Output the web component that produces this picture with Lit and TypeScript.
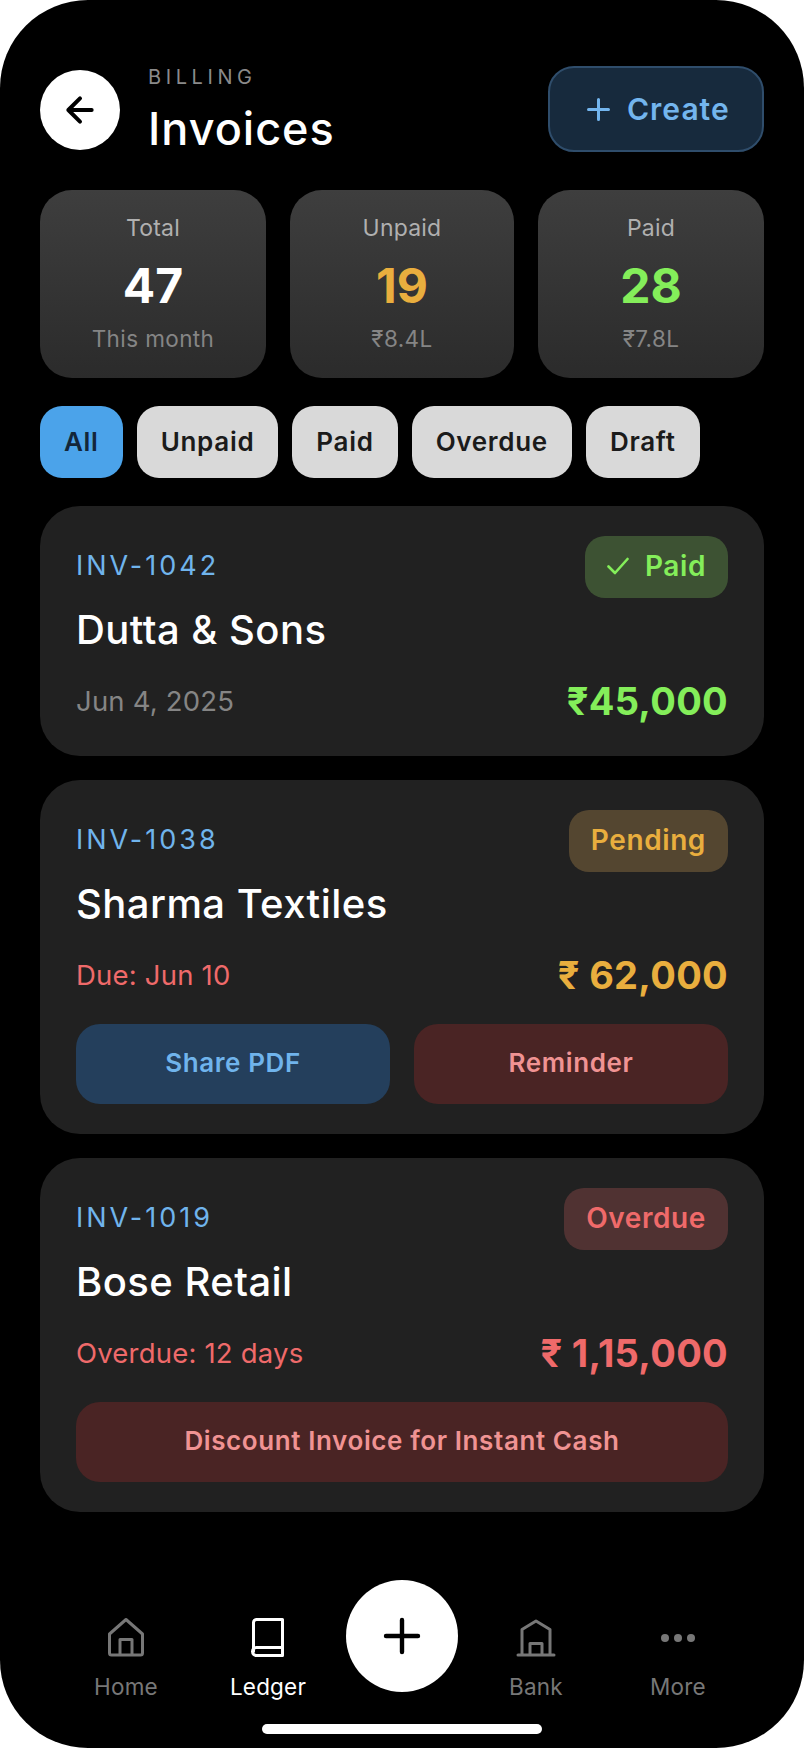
import { LitElement, html, css, svg } from "lit";
import { customElement } from "lit/decorators.js";

const icons = {
  back: svg`<path d="M19 12H5M12 19l-7-7 7-7" fill="none" stroke="#000" stroke-width="2.4" stroke-linecap="round" stroke-linejoin="round"/>`,
  home: svg`<path d="M7.500 20 24 5.500 40.500 20v19a2 2 0 0 1-2 2H9.500a2 2 0 0 1-2-2ZM18 41V25.500h12V41" fill="none" stroke="currentColor" stroke-width="3" stroke-linejoin="round"/>`,
  book: svg`<path d="M9.500 37.500V8.500a3 3 0 0 1 3-3h26v36h-26a4 4 0 0 1 0-8h26" fill="none" stroke="currentColor" stroke-width="3" stroke-linecap="round" stroke-linejoin="round"/>`,
  bank: svg`<path d="M10 41V15.500L24 7l14 8.500V41M6 41h36M18 41V29.500h12V41" fill="none" stroke="currentColor" stroke-width="3" stroke-linecap="round" stroke-linejoin="round"/>`,
  more: svg`<g fill="currentColor"><circle cx="11" cy="24" r="4"/><circle cx="24" cy="24" r="4"/><circle cx="37" cy="24" r="4"/></g>`,
};

interface Invoice {
  id: string;
  name: string;
  meta: string;
  amount: string;
  tone: "paid" | "pending" | "overdue";
  status: string;
  actions: { label: string; kind: "blue" | "red" }[];
}

const invoices: Invoice[] = [
  { id: "INV-1042", name: "Dutta & Sons", meta: "Jun 4, 2025", amount: "₹45,000", tone: "paid", status: "Paid", actions: [] },
  {
    id: "INV-1038", name: "Sharma Textiles", meta: "Due: Jun 10", amount: "₹ 62,000", tone: "pending", status: "Pending",
    actions: [{ label: "Share PDF", kind: "blue" }, { label: "Reminder", kind: "red" }],
  },
  {
    id: "INV-1019", name: "Bose Retail", meta: "Overdue: 12 days", amount: "₹ 1,15,000", tone: "overdue", status: "Overdue",
    actions: [{ label: "Discount Invoice for Instant Cash", kind: "red" }],
  },
];

const stats = [
  { label: "Total", value: "47", sub: "This month", tone: "white" },
  { label: "Unpaid", value: "19", sub: "₹8.4L", tone: "pending" },
  { label: "Paid", value: "28", sub: "₹7.8L", tone: "paid" },
];

const filters = ["All", "Unpaid", "Paid", "Overdue", "Draft"];

@customElement("app-root")
export class AppRoot extends LitElement {
  static styles = css`
    :host {
      display: block;
      width: 804px;
      height: 1748px;
      background: #fff;
      font-family: "Inter", "Noto Sans", sans-serif;
    }
    .phone {
      box-sizing: border-box;
      width: 804px;
      height: 1748px;
      background: #000;
      border-radius: 88px;
      overflow: hidden;
      padding: 66px 40px 14px;
      display: flex;
      flex-direction: column;
      color: #fff;
    }
    .header { display: flex; align-items: center; height: 86px; }
    .back {
      width: 80px; height: 80px; border-radius: 50%; background: #fff;
      display: flex; align-items: center; justify-content: center; margin-right: 28px; margin-top: 2px;
    }
    .back svg { width: 40px; height: 40px; }
    .titles { flex: 1; display: flex; flex-direction: column; margin-top: 4px; }
    .eyebrow { font-size: 20px; line-height: 24px; letter-spacing: 4.6px; color: #8a8a8a; font-weight: 400; }
    .title { font-size: 45px; line-height: 56px; font-weight: 500; margin-top: 12px; letter-spacing: 1px; }
    .create {
      box-sizing: border-box; width: 216px; height: 86px; border-radius: 26px;
      background: #172a3d; border: 2px solid #2f4d6b; color: #73b5ee;
      display: flex; align-items: center; padding-left: 37px; gap: 17px;
      font-size: 30px; font-weight: 600; letter-spacing: 1px;
    }
    .create svg { width: 23px; height: 23px; }
    .stats { display: grid; grid-template-columns: 226fr 224fr 226fr; gap: 24px; margin-top: 38px; }
    .stat {
      border-radius: 32px; background: linear-gradient(180deg, #3e3e3e 0%, #2b2b2b 100%);
      padding: 24px 0; display: flex; flex-direction: column; align-items: center; text-align: center;
    }
    .stat-label { font-size: 23px; line-height: 29px; color: #b0b0b0; letter-spacing: 0.2px; }
    .stat-value { font-size: 48px; line-height: 60px; font-weight: 700; margin-top: 13px; }
    .stat-sub { font-size: 22.500px; line-height: 30px; color: #858585; margin-top: 8px; letter-spacing: 0.4px; }
    .white { color: #fff; }
    .pending { color: #e9ae3e; }
    .paid { color: #84ee5a; }
    .overdue { color: #ef6a6a; }
    .filters { display: flex; gap: 14px; margin-top: 28px; }
    .chip {
      height: 72px; padding: 0 24px 2px; box-sizing: border-box; border-radius: 22px; background: #d9d9d9; color: #1b1b1b;
      display: flex; align-items: center; font-size: 26px; font-weight: 600; letter-spacing: 0.700px;
    }
    .chip.active { background: #4ba3ea; color: #13263a; }
    .cards { display: flex; flex-direction: column; gap: 24px; margin-top: 28px; }
    .card { background: #212121; border-radius: 40px; padding: 30px 36px; }
    .row { display: flex; align-items: center; justify-content: space-between; }
    .id { font-size: 27px; letter-spacing: 3px; color: #70b4ec; font-weight: 400; padding-bottom: 3px; }
    .badge {
      box-sizing: border-box; height: 62px; padding: 0 22px 2px; border-radius: 20px; display: flex; align-items: center; gap: 16px;
      font-size: 28px; font-weight: 600; letter-spacing: 0.600px;
    }
    .badge svg { width: 22px; height: 18px; }
    .badge.paid { background: #3d5233; }
    .badge.pending { background: #544630; }
    .badge.overdue { background: #503232; }
    .name { font-size: 40px; line-height: 50px; font-weight: 550; margin: 7px 0 21px; letter-spacing: 0.45px; }
    .meta { font-size: 27.500px; line-height: 50px; color: #858585; letter-spacing: 0.2px; }
    .meta.pending, .meta.overdue { color: #ef6a6a; }
    .amount { font-size: 38px; line-height: 50px; font-weight: 700; letter-spacing: 0.300px; }
    .actions { display: flex; gap: 24px; margin-top: 24px; }
    .action {
      flex: 1; height: 80px; border-radius: 24px; display: flex; align-items: center; justify-content: center;
      font-size: 26px; font-weight: 600; letter-spacing: 0.6px; padding-bottom: 3px; box-sizing: border-box;
    }
    .action.blue { background: #243f5c; color: #70b4ec; }
    .action.red { background: #4a2424; color: #f09393; }
    .nav {
      margin-top: auto; margin-left: 22px; margin-right: 22px;
      display: grid; grid-template-columns: 128px 128px 112px 128px 128px; gap: 14px; align-items: start;
    }
    .tab { display: flex; flex-direction: column; align-items: center; color: #777; font-size: 22.500px; line-height: 30px; margin-top: 34px; letter-spacing: 0.2px; }
    .tab svg { width: 48px; height: 48px; margin-bottom: 10px; }
    .tab.on { color: #fff; }
    .fab {
      width: 112px; height: 112px; border-radius: 50%; background: #fff;
      display: flex; align-items: center; justify-content: center;
    }
    .fab svg { width: 38px; height: 38px; }
    .indicator { align-self: center; width: 280px; height: 10px; border-radius: 5px; background: #fff; margin-top: 22px; }
  `;

  private tab(label: string, icon: unknown, on = false) {
    return html`<div class="tab ${on ? "on" : ""}"><svg viewBox="0 0 48 48">${icon}</svg><span>${label}</span></div>`;
  }

  render() {
    return html`
      <div class="phone">
        <div class="header">
          <div class="back"><svg viewBox="0 0 24 24">${icons.back}</svg></div>
          <div class="titles">
            <div class="eyebrow">BILLING</div>
            <div class="title">Invoices</div>
          </div>
          <div class="create">
            <svg viewBox="0 0 23 23"><path d="M11.500 1.500v20M1.500 11.500h20" fill="none" stroke="currentColor" stroke-width="3" stroke-linecap="round"/></svg>
            <span>Create</span>
          </div>
        </div>
        <div class="stats">
          ${stats.map((s) => html`
            <div class="stat">
              <div class="stat-label">${s.label}</div>
              <div class="stat-value ${s.tone}">${s.value}</div>
              <div class="stat-sub">${s.sub}</div>
            </div>`)}
        </div>
        <div class="filters">
          ${filters.map((f, i) => html`<div class="chip ${i === 0 ? "active" : ""}">${f}</div>`)}
        </div>
        <div class="cards">
          ${invoices.map((v) => html`
            <div class="card">
              <div class="row">
                <div class="id">${v.id}</div>
                <div class="badge ${v.tone}">
                  ${v.tone === "paid" ? html`<svg viewBox="0 0 22 18"><path d="M1.500 9.500 8 16 20.500 2" fill="none" stroke="currentColor" stroke-width="2.600" stroke-linecap="round" stroke-linejoin="round"/></svg>` : ""}
                  <span>${v.status}</span>
                </div>
              </div>
              <div class="name">${v.name}</div>
              <div class="row">
                <div class="meta ${v.tone}">${v.meta}</div>
                <div class="amount ${v.tone}">${v.amount}</div>
              </div>
              ${v.actions.length ? html`<div class="actions">
                ${v.actions.map((a) => html`<div class="action ${a.kind}">${a.label}</div>`)}
              </div>` : ""}
            </div>`)}
        </div>
        <div class="nav">
          ${this.tab("Home", icons.home)}
          ${this.tab("Ledger", icons.book, true)}
          <div class="fab">
            <svg viewBox="0 0 38 38"><path d="M19 3v32M3 19h32" fill="none" stroke="#000" stroke-width="4.400" stroke-linecap="round"/></svg>
          </div>
          ${this.tab("Bank", icons.bank)}
          ${this.tab("More", icons.more)}
        </div>
        <div class="indicator"></div>
      </div>
    `;
  }
}
